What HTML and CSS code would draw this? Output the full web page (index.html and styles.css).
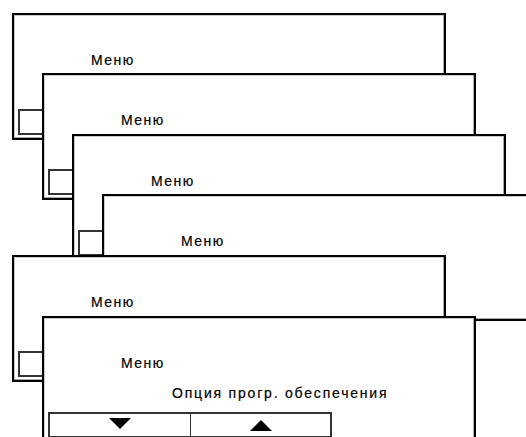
FILE: index.html
```
<!DOCTYPE html>
<html>
  <head>
    <title>Меню</title>
    <link rel="stylesheet" href="styles.css">
  </head>
  <body>
    <div class="canvas">
      <!-- каждое окно сдвинуто на 30px вправо и ~60px вниз -->
      <div class="screen s1">
        <div class="title">Меню</div>
        <div class="subtitle"></div>
        <div class="bar"><div class="btn"></div><div class="btn"></div></div>
      </div>
      <div class="screen s2">
        <div class="title">Меню</div>
        <div class="subtitle"></div>
        <div class="bar"><div class="btn"></div><div class="btn"></div></div>
      </div>
      <div class="screen s3">
        <div class="title">Меню</div>
        <div class="subtitle"></div>
        <div class="bar"><div class="btn"></div><div class="btn"></div></div>
      </div>
      <div class="screen s4">
        <div class="title">Меню</div>
        <div class="subtitle"></div>
        <div class="bar"><div class="btn"></div><div class="btn"></div></div>
      </div>
      <div class="screen s5">
        <div class="title">Меню</div>
        <div class="subtitle"></div>
        <div class="bar"><div class="btn"></div><div class="btn"></div></div>
      </div>
      <div class="screen s6">
        <div class="title">Меню</div>
        <div class="subtitle">Опция прогр. обеспечения</div>
        <div class="bar">
          <div class="btn">
            <svg width="22" height="11" viewBox="0 0 22 11"><polygon points="0,0 22,0 11,11" fill="#000"/></svg>
          </div>
          <div class="btn up">
            <svg width="22" height="11" viewBox="0 0 22 11"><polygon points="0,11 22,11 11,0" fill="#000"/></svg>
          </div>
        </div>
      </div>
    </div>
  </body>
</html>
```

FILE: styles.css
```
body {
  margin: 0;
  background: #fff;
  font-family: "Liberation Sans", Arial, sans-serif;
  overflow: hidden;
}
.canvas {
  position: relative;
  width: 526px;
  height: 437px;
  overflow: hidden;
}
.screen {
  position: absolute;
  width: 434px;
  height: 127px;
  box-sizing: border-box;
  border: 2px solid #000;
  background: #fff;
  box-shadow: inset -1px -1px 0 #aaa, inset 1px 1px 0 #ccc;
  display: flex;
  flex-direction: column;
  padding: 37px 0 0 4px;
}
.s1 { left: 12px; top: 13px; }
.s2 { left: 42px; top: 73px; }
.s3 { left: 72px; top: 134px; }
.s4 { left: 102px; top: 194px; }
.s5 { left: 12px; top: 255px; }
.s6 { left: 42px; top: 316px; }
.title, .subtitle {
  font-size: 14px;
  line-height: 16px;
  height: 16px;
  color: #000;
  -webkit-text-stroke: 0.2px #000;
}
.title {
  margin-left: 73px;
  letter-spacing: 1.5px;
}
.subtitle {
  margin-top: 14px;
  margin-left: 124px;
  letter-spacing: 1.8px;
}
.bar {
  margin-top: 11px;
  width: 284px;
  height: 26px;
  box-sizing: border-box;
  border: 2px solid #333;
  display: grid;
  grid-template-columns: 140px 1fr;
}
.btn {
  display: flex;
  justify-content: center;
  padding-top: 4px;
}
.btn svg {
  display: block;
}
.btn.up {
  border-left: 1px solid #333;
  padding-top: 6px;
}
```
